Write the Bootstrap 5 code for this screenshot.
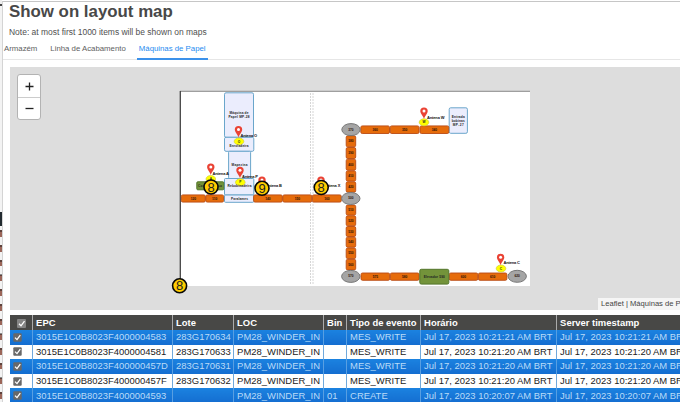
<!DOCTYPE html>
<html lang="pt">
<head>
<meta charset="utf-8">
<meta name="viewport" content="width=device-width, initial-scale=1">
<title>Show on layout map</title>
<link href="https://cdn.jsdelivr.net/npm/bootstrap@5.3.0/dist/css/bootstrap.min.css" rel="stylesheet">
<style>
body{font-family:"Liberation Sans",Arial,sans-serif;width:682px;height:402px;background:#fff;color:#444}
.edge{width:2px;height:402px;background:linear-gradient(#eee 0 4px,#444 4px 6px,#f3f3f3 6px 212px,#222b30 212px 226px,#f3f3f3 226px)}
.edge svg{display:block}
.panel{width:678px;height:402px;border-top:1px solid #c6c6c6;border-left:1px solid #d4d4d4;margin-top:1px}
.title{font-size:16.85px;line-height:20px;font-weight:700;color:#484848;padding:0 0 0 6px}
.note{font-size:8.47px;line-height:12px;padding-left:6px;margin-top:4px;color:#505050}
.maptabs{height:22px;border-bottom:1px solid #e6e6e6;font-size:7.8px;gap:13px;padding-left:1px}
.maptabs .nav-link{padding:0;line-height:21px;color:#606060;white-space:nowrap;height:22px}
.maptabs .nav-link.active{color:#268bf0;border-bottom:2px solid #3b91ea;padding:0 2px;margin-left:-2px}
.map{margin:7px 0 0 7px;height:243px;background:#ddd}
.map>svg{display:block}
.zoomctl{left:7px;top:7px;width:24px;height:46px;border:1px solid #b3b3b3;border-radius:3px;background:#fff}
.zoomctl button{height:22px;border:0;background:none;padding:0;display:flex;align-items:center;justify-content:center}
.zoomctl button+button{border-top:1px solid #ccc}
.credit{right:0;bottom:0;width:82px;height:12px;background:#f5f5f5;font-size:7.6px;line-height:12px;padding-left:3px;white-space:nowrap;color:#444}
.grid{table-layout:fixed;width:671px;margin:5px 0 0 7px;border-collapse:collapse;font-size:9.45px;line-height:14px;color:#222}
.grid th,.grid td{padding:0 0 0 3.6px;height:14.6px;white-space:nowrap;overflow:hidden;border-left:1px solid #70a9dc}
.grid th{background:#484846;color:#fff;border-left-color:#aaa;height:15px;padding-top:1px}
.grid th:first-child,.grid td:first-child{border-left:0;padding-left:3px}
.grid tr.sel td{background:linear-gradient(#1b82e0,#146dd0);color:#b9dbf8;border-left-color:#589fe2}
.grid svg{display:block}
.grid text,.map text{font-family:"Liberation Sans",Arial,sans-serif}
</style>
<script src="https://cdn.jsdelivr.net/npm/bootstrap@5.3.0/dist/js/bootstrap.bundle.min.js"></script>
</head>
<body class="overflow-hidden m-0">
<div class="d-flex">
<aside class="edge flex-shrink-0"><svg width="2" height="402"><g fill="#9b6558"><path d="M0 230h2v7H0zM0 245h2v7H0zM0 260h2v6H0zM0 275h2v6H0zM0 289h2v7H0zM0 304h2v7H0zM0 319h2v6H0zM0 334h2v6H0zM0 348h2v7H0zM0 363h2v6H0zM0 378h2v6H0zM0 392h2v7H0z"/></g><path d="M0 231h2m-2 15h2m-2 15h2m-2 14h2m-2 15h2m-2 15h2m-2 15h2m-2 14h2m-2 15h2m-2 15h2m-2 14h2m-2 15h2" stroke="#222"/></svg></aside>
<main class="panel flex-shrink-0 overflow-hidden">
<h1 class="title m-0">Show on layout map</h1>
<p class="note mb-0">Note: at most first 1000 items will be shown on maps</p>
<nav class="nav maptabs flex-nowrap"><a class="nav-link" href="#">Armazém</a><a class="nav-link" href="#">Linha de Acabamento</a><a class="nav-link active" href="#">Máquinas de Papel</a></nav>
<section class="map position-relative overflow-hidden">
<svg width="670" height="243" viewBox="10 67 670 243">
<defs><g id="pin"><path d="M0 0C-.5-3-3.7-5-3.7-8A3.7 3.5 0 0 1 3.7-8C3.7-5 .5-3 0 0z" fill="#ea4335"/><circle cy="-7.9" r="1.5" fill="#fff"/></g></defs>
<path fill="#fff" d="M180 91h350v195H180z"/><path d="M180 91.3h350" stroke="#888"/><path d="M180.3 91v195" stroke="#444" stroke-width="1.3"/>
<path d="M310.5 93v192M313 93v192" stroke="#ccc" stroke-width=".8" stroke-dasharray="2 1"/>
<g fill="#ebedfd" stroke="#6aa6cb"><rect x="224.5" y="92.8" width="29" height="44.5" rx="1.5"/><rect x="224.5" y="137.3" width="29.3" height="14" rx="1.5"/><rect x="228.6" y="151.3" width="22" height="27.2" rx="1"/><rect x="224.5" y="178.5" width="29.3" height="16.5" rx="1"/><rect x="224.5" y="195" width="29.3" height="7.3" rx="1"/><rect x="449.2" y="107.8" width="18.2" height="25.5" rx="1.5"/></g>
<g fill="#e66c0b" stroke="#b94b14" stroke-width=".9">
<rect x="181.3" y="194.9" width="24" height="7.2" rx="1.5"/><rect x="205.8" y="194.9" width="17.8" height="7.2" rx="1.5"/><rect x="253.6" y="194.9" width="28.7" height="7.2" rx="1.5"/><rect x="282.8" y="194.9" width="29" height="7.2" rx="1.5"/><rect x="312.3" y="194.9" width="29" height="7.2" rx="1.5"/>
<rect x="360.8" y="125.9" width="28.7" height="7.6" rx="1.5"/><rect x="390.2" y="125.9" width="28.8" height="7.6" rx="1.5"/><rect x="420" y="125.9" width="28.8" height="7.6" rx="1.5"/>
<rect x="346.2" y="135.8" width="9.5" height="11" rx="1.5"/><rect x="346.2" y="147.5" width="9.5" height="11" rx="1.5"/><rect x="346.2" y="159.2" width="9.5" height="11" rx="1.5"/><rect x="346.2" y="170.9" width="9.5" height="10.2" rx="1.5"/><rect x="346.2" y="181.8" width="9.5" height="10.4" rx="1.5"/>
<rect x="346.2" y="205.1" width="9.5" height="10" rx="1.5"/><rect x="346.2" y="215.8" width="9.5" height="10" rx="1.5"/><rect x="346.2" y="226.5" width="9.5" height="10" rx="1.5"/><rect x="346.2" y="237.2" width="9.5" height="10" rx="1.5"/><rect x="346.2" y="248" width="9.5" height="10.6" rx="1.5"/><rect x="346.2" y="259.3" width="9.5" height="10.6" rx="1.5"/>
<rect x="361" y="273" width="28.7" height="7.3" rx="1.5"/><rect x="390.3" y="273" width="28.8" height="7.3" rx="1.5"/><rect x="449.3" y="273" width="28.5" height="7.3" rx="1.5"/><rect x="478.4" y="273" width="28.5" height="7.3" rx="1.5"/></g>
<g fill="#73933a" stroke="#52752b"><rect x="196.8" y="181.8" width="27" height="8" rx="1"/><rect x="419.8" y="269.3" width="29" height="14.8" rx="1.5"/></g>
<g fill="#a5a5a5" stroke="#777"><ellipse cx="351" cy="129.6" rx="9.2" ry="6"/><ellipse cx="350.8" cy="198.5" rx="9.2" ry="6"/><ellipse cx="350.8" cy="276.4" rx="9.2" ry="6"/><ellipse cx="517.2" cy="276.3" rx="9.2" ry="6"/></g>
<g fill="#ff0" stroke="#d3cf3b" stroke-width=".7"><ellipse cx="239" cy="141.4" rx="4.8" ry="3.5"/><ellipse cx="210.8" cy="179" rx="4.8" ry="3.5"/><ellipse cx="240.3" cy="182.3" rx="4.8" ry="3.5"/><ellipse cx="424" cy="122.3" rx="4.8" ry="3.5"/><ellipse cx="501" cy="268.5" rx="4.8" ry="3.5"/></g>
<g font-size="3.2" font-weight="700" fill="#222" text-anchor="middle">
<text x="239" y="114.4" textLength="19">Máquina de</text><text x="239" y="118.2" textLength="21">Papel MP-28</text><text x="239" y="147.1" textLength="19">Enroladeira</text><text x="239.5" y="166.3" textLength="16">Mapezina</text><text x="239.5" y="187.3" textLength="24">Rebobinadeira</text><text x="239.5" y="199.6" textLength="17">Paralames</text>
<text x="458.2" y="118.1" textLength="13">Entrada</text><text x="458.2" y="121.8" textLength="13">bobinas</text><text x="458.2" y="125.5" textLength="11">MP-27</text>
<text x="434.3" y="278" textLength="21">Elevador 590</text><text x="210" y="187" textLength="24">Controle Peso</text>
<text x="239" y="142.5">O</text><text x="210.8" y="179.6">A</text><text x="240.3" y="183.4">P</text><text x="424" y="123.4">W</text><text x="501" y="269.6">C</text></g>
<g font-size="3.2" font-weight="700" fill="#2b1208" text-anchor="middle">
<text x="193.3" y="199.6">120</text><text x="214.7" y="199.6">110</text><text x="268" y="199.6">140</text><text x="297.3" y="199.6">150</text><text x="326.8" y="199.6">160</text>
<text x="351" y="130.6">370</text><text x="375.2" y="130.8">360</text><text x="404.6" y="130.8">350</text><text x="434.4" y="130.8">340</text>
<text x="351" y="142.4">380</text><text x="351" y="154">390</text><text x="351" y="165.7">400</text><text x="351" y="177">410</text><text x="351" y="188">420</text><text x="350.8" y="199.3">500</text>
<text x="351" y="211.2">510</text><text x="351" y="221.9">520</text><text x="351" y="232.6">530</text><text x="351" y="243.3">540</text><text x="351" y="254.4">550</text><text x="351" y="265.6">560</text><text x="351" y="277.4">570</text>
<text x="375.4" y="277.7">575</text><text x="404.7" y="277.7">580</text><text x="463.5" y="277.7">600</text><text x="492.6" y="277.7">610</text><text x="517.2" y="277.3">620</text></g>
<g><use href="#pin" x="238.5" y="137.5"/><use href="#pin" x="210.8" y="175"/><use href="#pin" x="240" y="178.2"/><use href="#pin" x="262" y="188"/><use href="#pin" x="321" y="188"/><use href="#pin" x="424" y="119"/><use href="#pin" x="500.6" y="265.2"/></g>
<g font-size="4" font-weight="700" fill="#111"><text x="240.5" y="137" textLength="16.5">Antena O</text><text x="212.5" y="174.7" textLength="16.5">Antena A</text><text x="242" y="177.7" textLength="16">Antena P</text><text x="265.5" y="187.2" textLength="16.5">Antena B</text><text x="324" y="187.2" textLength="16.3">Antena X</text><text x="427" y="119.2" textLength="17.5">Antena W</text><text x="503.5" y="263.6" textLength="16.5">Antena C</text></g>
<g fill="#fc0" stroke="#080808" stroke-width="1.6"><circle cx="211" cy="187" r="7"/><circle cx="262" cy="188.3" r="7"/><circle cx="321.2" cy="187.5" r="7"/><circle cx="179.6" cy="285.8" r="7"/></g>
<g font-size="13" fill="#222" text-anchor="middle"><text x="211" y="191.6">8</text><text x="262" y="192.9">9</text><text x="321.2" y="192.1">8</text><text x="179.6" y="290.4">8</text></g>
</svg>
<div class="zoomctl position-absolute d-flex flex-column"><button aria-label="Zoom in"><svg width="9" height="9"><path d="M.5 4.5h8M4.5.5v8" stroke="#222" stroke-width="1.3"/></svg></button><button aria-label="Zoom out"><svg width="9" height="9"><path d="M.5 4.5h8" stroke="#222" stroke-width="1.3"/></svg></button></div>
<div class="credit position-absolute overflow-hidden">Leaflet | Máquinas de Papel</div>
</section>
<table class="grid">
<colgroup><col style="width:22px"><col style="width:140px"><col style="width:61px"><col style="width:90px"><col style="width:23px"><col style="width:74px"><col style="width:136px"><col></colgroup>
<thead><tr><th><svg class="mx-auto" width="12" height="9"><rect x="1" width="9" height="9" rx="1" fill="#858585"/><path d="M3 4.8l2 2L8.5 2.2" fill="none" stroke="#fff" stroke-width="1.3"/></svg></th><th>EPC</th><th>Lote</th><th>LOC</th><th>Bin</th><th>Tipo de evento</th><th>Horário</th><th>Server timestamp</th></tr></thead>
<tbody id="rows"></tbody>
</table>
</main>
</div>
<script>
const events=[["3015E1C0B8023F4000004583","283G170634","","MES_WRITE","10:21:21"],["3015E1C0B8023F4000004581","283G170633","","MES_WRITE","10:21:20"],["3015E1C0B8023F400000457D","283G170631","","MES_WRITE","10:21:20"],["3015E1C0B8023F400000457F","283G170632","","MES_WRITE","10:21:20"],["3015E1C0B8023F4000004593","","01","CREATE","10:20:07"]];
const check='<svg width="9" height="9"><rect x=".3" y=".3" width="8.4" height="8.4" rx="1" fill="#686868"/><path d="M2 4.6l2 2L7.3 2.2" fill="none" stroke="#fff" stroke-width="1.3"/></svg>';
document.getElementById('rows').innerHTML=events.map((e,i)=>{const t='Jul 17, 2023 '+e[4]+' AM BRT';return `<tr class="${i%2?'':'sel'}"><td>${check}</td><td>${e[0]}</td><td>${e[1]}</td><td>PM28_WINDER_IN</td><td>${e[2]}</td><td>${e[3]}</td><td>${t}</td><td>${t}</td></tr>`}).join('');
</script>
</body>
</html>
